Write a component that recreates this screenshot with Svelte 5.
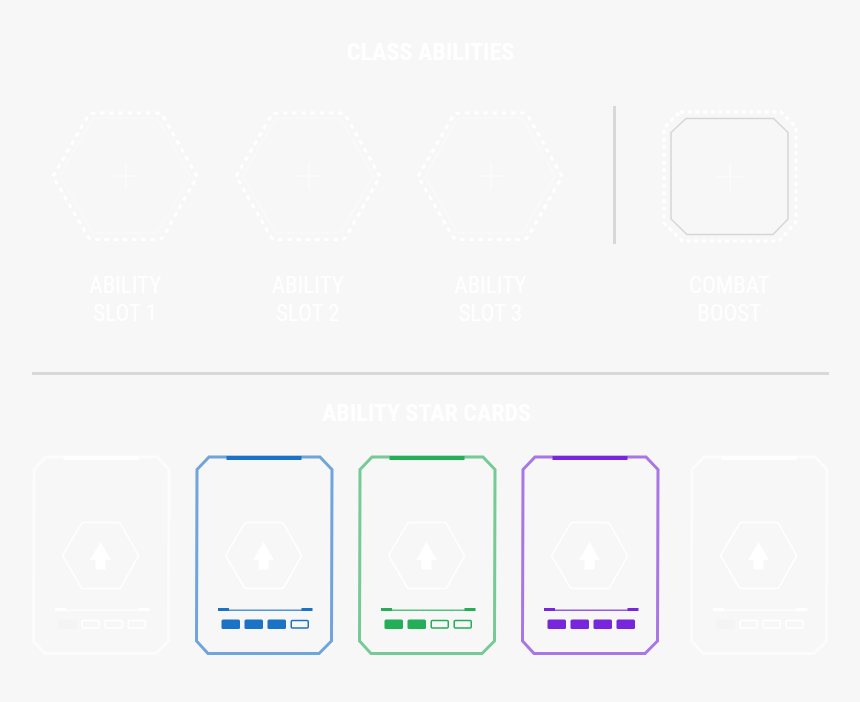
<script lang="ts">
  type Card = { id: number; tone: string; level: number };

  const slots = ["Ability Slot 1", "Ability Slot 2", "Ability Slot 3"];

  const cards: Card[] = [
    { id: 1, tone: "common", level: 1 },
    { id: 2, tone: "rare", level: 3 },
    { id: 3, tone: "uncommon", level: 2 },
    { id: 4, tone: "epic", level: 4 },
    { id: 5, tone: "common", level: 1 },
  ];

  const pips = [0, 1, 2, 3];
</script>

<main class="loadout">
  <section class="abilities">
    <h2>Class Abilities</h2>
    <div class="slots">
      {#each slots as slot}
        <button class="slot" type="button">
          <svg width="150" height="138" viewBox="0 0 150 138" aria-hidden="true">
            <path class="dots" d="M3 70.500 L38 10 Q40 7 44 7 H107 Q111 7 113 10 L147 70.500 L113 131 Q111 133.500 107 133.500 H44 Q40 133.500 38 131 Z" />
            <path class="inner" d="M10 70 L41 15 Q43 12 46 12 H104 Q107 12 109 15 L140 70 L109 124 Q107 127 104 127 H46 Q43 127 41 124 Z" />
            <path class="plus" d="M63 70 H89 M76 57 V83" />
          </svg>
          <span>{slot}</span>
        </button>
      {/each}

      <div class="separator"></div>

      <button class="slot" type="button">
        <svg width="138" height="138" viewBox="0 0 138 138" aria-hidden="true">
          <path class="boost-dots" d="M20 6 H121 L136 21 V116 L119 135 H22 L4 117 V22 Z" />
          <path class="boost-frame" d="M26 12.500 H113.500 L128 26.500 V113 L113 128.500 H27 L11 113 V26.500 Z" />
          <path class="plus" d="M57 71 H83 M70 58 V84" />
        </svg>
        <span>Combat Boost</span>
      </button>
    </div>
  </section>

  <hr />

  <section class="star-cards">
    <h2>Ability Star Cards</h2>
    <div class="cards">
      {#each cards as card (card.id)}
        <button class="card {card.tone}" type="button" aria-label="Star card {card.id}">
          <svg viewBox="0 0 139 200" aria-hidden="true">
            <path class="frame" d="M14 2 H125 L137 14.500 L136.500 186 L124 198.500 H13 L1.500 186 L2 14.500 Z" />
            <rect class="solid" x="31.500" y="1" width="75" height="4" />
            <path class="hex" d="M31 101.500 Q30.500 100.500 31 99.500 L49 69.500 Q50 67.500 52 67.500 H86 Q88 67.500 89 69.500 L106 99.500 Q107 100.500 106 102 L89 132 Q88 133.500 86 133.500 H52 Q50 133.500 49 132 Z" />
            <path class="arrow" d="M68.500 87 L79 105 H73.500 V114.500 H63.500 V105 H58 Z" />
            <rect class="rule" x="23" y="154.500" width="94" height="1.500" />
            <path class="solid" d="M23 153 H34 V156 H23 Z M106.500 153 H117.500 V156 H106.500 Z" />
            {#each pips as i}
              {#if i < card.level}
                <rect class="pip full" x={26.5 + i * 23} y="164.500" width="18.500" height="9.500" rx="1.500" />
              {:else}
                <rect class="pip" x={27.25 + i * 23} y="165.500" width="17" height="7.500" rx="1" />
              {/if}
            {/each}
          </svg>
        </button>
      {/each}
    </div>
  </section>
</main>

<style>
  :global(body) {
    margin: 0;
    background: #f7f7f7;
  }

  .loadout {
    padding: 36px 31px 48px 32px;
    color: #fff;
    font-family: "Liberation Sans Narrow", "Roboto Condensed", "Arial Narrow", sans-serif;
    text-transform: uppercase;
  }

  h2 {
    margin: 0;
    font-size: 24px;
    line-height: 32px;
    font-weight: 700;
    text-align: center;
  }

  button {
    padding: 0;
    border: 0;
    background: none;
    color: inherit;
    font: inherit;
    text-transform: inherit;
    cursor: pointer;
  }

  svg {
    display: block;
    fill: none;
  }

  .slots {
    display: grid;
    grid-template-columns: 183fr 183fr 183fr 66fr 164fr;
    align-items: start;
    padding: 0 18px 0 2px;
    margin-top: 38px;
  }

  .slot {
    display: flex;
    flex-direction: column;
    align-items: center;
    gap: 28px;
  }

  .slot span {
    width: 96px;
    font-size: 23px;
    line-height: 28px;
    text-align: center;
  }

  .dots,
  .boost-dots {
    stroke: #fff;
    stroke-width: 3;
    stroke-dasharray: 4.500 4.700;
  }

  .boost-dots {
    stroke-dasharray: 4 3.700;
  }

  .inner {
    stroke: #f9f9f9;
    stroke-width: 2;
  }

  .plus {
    stroke: #fafafa;
    stroke-width: 2;
  }

  .boost-frame {
    stroke: #d6d6d6;
    stroke-width: 1.500;
  }

  .separator {
    justify-self: center;
    width: 3px;
    height: 138px;
    background: #d8d8d8;
  }

  hr {
    height: 3px;
    margin: 44px 0 22px;
    border: 0;
    background: #d8d8d8;
  }

  .star-cards h2 {
    padding-right: 8px;
  }

  .cards {
    display: flex;
    gap: 24px;
    margin-top: 26px;
  }

  .card {
    flex: 0 1 139px;
    min-width: 0;
    color: #fff;
  }

  .card:last-child {
    margin-left: auto;
  }

  .card svg {
    width: 100%;
  }

  .rare {
    color: #1b73c8;
  }

  .uncommon {
    color: #25ae58;
  }

  .epic {
    color: #7726dd;
  }

  .frame {
    stroke: currentColor;
    stroke-width: 3;
    opacity: 0.62;
  }

  .solid {
    fill: currentColor;
  }

  .rule {
    fill: currentColor;
    opacity: 0.75;
  }

  .hex {
    stroke: #fff;
    stroke-width: 1.500;
  }

  .arrow {
    fill: #fff;
  }

  .pip {
    stroke: currentColor;
    stroke-width: 1.500;
  }

  .pip.full {
    fill: currentColor;
    stroke: none;
  }

  .common .pip.full {
    fill: #f4f4f4;
  }
</style>
